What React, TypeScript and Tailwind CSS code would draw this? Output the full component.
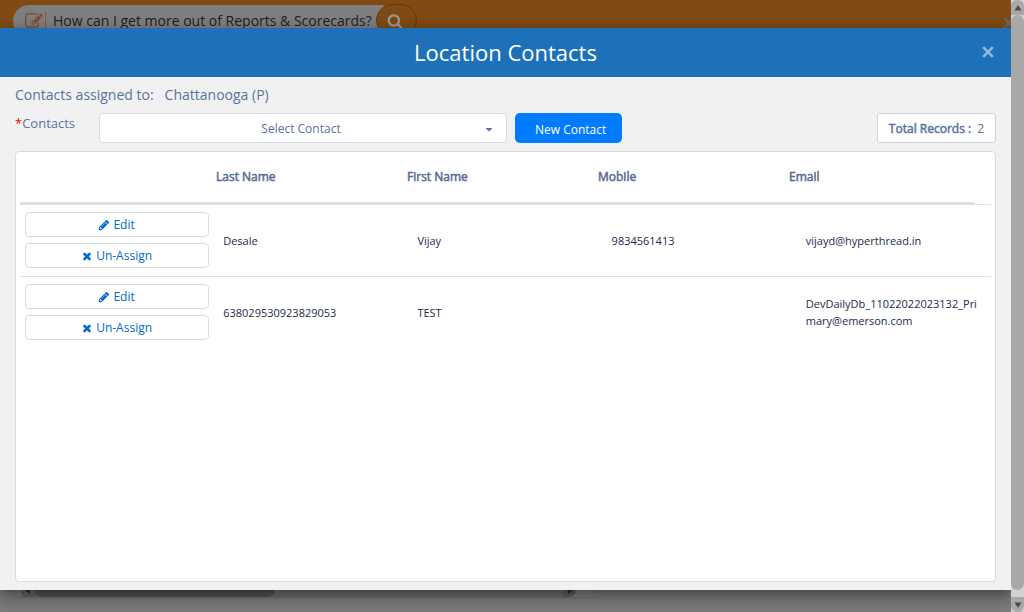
import type { ReactNode } from 'react';

type Contact = {
  id: number;
  lastName: string;
  firstName: string;
  mobile: string;
  email: string;
};

const contacts: Contact[] = [
  { id: 1, lastName: 'Desale', firstName: 'Vijay', mobile: '9834561413', email: 'vijayd@hyperthread.in' },
  {
    id: 2,
    lastName: '638029530923829053',
    firstName: 'TEST',
    mobile: '',
    email: 'DevDailyDb_11022022023132_Primary@emerson.com',
  },
];

const paths = {
  pencil:
    'M491 1536l91-91-235-235-91 91v107h128v128h107zm523-928q0-22-22-22-10 0-17 7l-542 542q-7 7-7 17 0 22 22 22 10 0 17-7l542-542q7-7 7-17zm-54-192l416 416-832 832h-416v-416zm683 96q0 53-37 90l-166 166-416-416 166-165q36-38 90-38 53 0 91 38l235 234q37 39 37 91z',
  times:
    'M1490 1322q0 40-28 68l-136 136q-28 28-68 28t-68-28l-294-294-294 294q-28 28-68 28t-68-28l-136-136q-28-28-28-68t28-68l294-294-294-294q-28-28-28-68t28-68l136-136q28-28 68-28t68 28l294 294 294-294q28-28 68-28t68 28l136 136q28 28 28 68t-28 68l-294 294 294 294q28 28 28 68z',
  search:
    'M1216 832q0-185-131.5-316.5t-316.5-131.5-316.5 131.5-131.5 316.5 131.5 316.5 316.5 131.5 316.5-131.5 131.5-316.5zm512 832q0 52-38 90t-90 38q-54 0-90-38l-343-342q-179 124-399 124-143 0-273.5-55.5t-225-150-150-225-55.5-273.5 55.5-273.5 150-225 225-150 273.5-55.5 273.5 55.5 225 150 150 225 55.5 273.5q0 220-124 399l343 343q37 37 37 90z',
  compose:
    'M888 1184l116-116-152-152-116 116v56h96v96h56zm440-720q-16-16-33 1l-350 350q-17 17-1 33t33-1l350-350q17-17 1-33zm80 594v190q0 119-84.5 203.5t-203.5 84.5h-832q-119 0-203.5-84.5t-84.5-203.5v-832q0-119 84.5-203.5t203.5-84.5h832q63 0 117 25 15 7 18 23 3 17-9 29l-49 49q-14 14-32 8-23-6-45-6h-832q-66 0-113 47t-47 113v832q0 66 47 113t113 47h832q66 0 113-47t47-113v-126q0-13 9-22l64-64q15-15 35-7t20 29zm-96-738l288 288-672 672h-288v-288zm444 132l-92 92-288-288 92-92q28-28 68-28t68 28l152 152q28 28 28 68t-28 68z',
};

function Icon({ name, className }: { name: keyof typeof paths; className: string }) {
  return (
    <svg viewBox="0 0 1792 1792" fill="currentColor" aria-hidden="true" className={className}>
      <path d={paths[name]} />
    </svg>
  );
}

function Cross() {
  return (
    <svg viewBox="0 0 12 12" stroke="currentColor" strokeWidth="2.6" aria-hidden="true" className="size-3">
      <path d="M1.2 1.2L10.8 10.8M10.8 1.2L1.2 10.8" />
    </svg>
  );
}

function TopBar() {
  return (
    <div className="flex h-7 shrink-0 items-start overflow-hidden bg-[#7f4a13] pl-[13px]">
      <div className="mt-[5px] flex h-8 w-[383px] items-center rounded-full bg-[#7f7f7f] pl-3">
        <Icon name="compose" className="size-[18px] text-[#7f4a33]" />
        <span className="ml-0.5 h-5 w-px bg-[#85583a]" />
        <input
          aria-label="Search"
          defaultValue="How can I get more out of Reports & Scorecards?"
          className="ml-[7px] w-[322px] bg-transparent text-sm text-[#1c2024] outline-none"
        />
      </div>
      <button
        aria-label="Search"
        className="-ml-5 mt-1 flex h-[33px] w-[41px] shrink-0 items-center justify-center rounded-full border border-[#5f370e] bg-[#7f4a13] pr-1 text-[#999]"
      >
        <Icon name="search" className="size-4" />
      </button>
      <button aria-label="Close page" className="-mr-1 ml-auto mt-[17px] text-[#6c6763]">
        <Cross />
      </button>
    </div>
  );
}

function BottomStrip() {
  return (
    <div className="h-[22px] shrink-0 overflow-hidden bg-[#7a7a7a] pl-4">
      <div className="flex h-2 w-[578px] overflow-hidden rounded-b border-b border-[#707070] bg-[#808080] pl-[5px]">
        <span className="flex w-[13px] justify-center rounded-bl bg-[#686868]">
          <svg viewBox="0 0 8 6" className="h-1.5 w-2" fill="#303030">
            <path d="M1 0H6V4Z" />
          </svg>
        </span>
        <span className="w-[529px] bg-[#707070]">
          <span className="block h-full w-[241px] rounded-b-lg bg-[#555]" />
        </span>
        <span className="flex w-[13px] justify-center rounded-br-lg bg-[#606060]">
          <svg viewBox="0 0 8 6" className="h-1.5 w-2" fill="#303030">
            <path d="M2 0H7L2 4Z" />
          </svg>
        </span>
      </div>
    </div>
  );
}

function PageScrollbar() {
  return (
    <div className="relative z-10 flex w-[13px] shrink-0 flex-col bg-[#d2d2d2]" aria-hidden="true">
      <span className="flex h-[15px] items-center justify-center rounded-t-md bg-[#a8a8a8]">
        <svg viewBox="0 0 8 6" className="h-1.5 w-2" fill="#4a4a4a">
          <path d="M4 0L7.5 5.5H.5Z" />
        </svg>
      </span>
      <span className="h-[576px] max-h-[94%] rounded-full bg-[#a8a8a8]" />
      <span className="mt-auto flex h-[15px] items-center justify-center rounded-b-md bg-[#a8a8a8]">
        <svg viewBox="0 0 8 6" className="h-1.5 w-2" fill="#4a4a4a">
          <path d="M4 6L.5 .5H7.5Z" />
        </svg>
      </span>
    </div>
  );
}

function RowButton({ icon, children }: { icon: keyof typeof paths; children: ReactNode }) {
  return (
    <button className="flex h-[25px] w-full items-center justify-center gap-[3px] rounded border border-[#d8dbe6] bg-white pr-px text-xs text-[#0069d2]">
      <Icon name={icon} className="size-3" />
      {children}
    </button>
  );
}

function ContactsTable() {
  return (
    <table className="block text-left">
      <thead className="mr-4 block border-b-2 border-[#dee2e6]">
        <tr className="grid h-[50px] grid-cols-5 items-center text-xs text-[#566b92]">
          <td />
          {['Last Name', 'First Name', 'Mobile', 'Email'].map((label) => (
            <th key={label} className="px-[5px] font-normal [-webkit-text-stroke:0.5px]">
              {label}
            </th>
          ))}
        </tr>
      </thead>
      <tbody className="block">
        {contacts.map((contact) => (
          <tr
            key={contact.id}
            className="grid grid-cols-5 items-center border-t border-[#dee2e6] pb-2 pt-[7px] text-[11px] leading-[17px] text-[#1b2a4e]"
          >
            <td className="flex flex-col gap-1.5 px-[5px]">
              <RowButton icon="pencil">Edit</RowButton>
              <RowButton icon="times">Un-Assign</RowButton>
            </td>
            <td className="px-[9px]">{contact.lastName}</td>
            <td className="px-[9px]">{contact.firstName}</td>
            <td className="px-[9px]">{contact.mobile}</td>
            <td className="break-all px-[9px]">{contact.email}</td>
          </tr>
        ))}
      </tbody>
    </table>
  );
}

function ContactsDialog() {
  return (
    <section
      role="dialog"
      aria-labelledby="dialog-title"
      className="relative flex flex-1 flex-col bg-[#f1f1f1] shadow-[0_5px_15px_rgba(0,0,0,0.5)]"
    >
      <header className="flex h-[49px] shrink-0 items-center bg-[#1e71b9] px-[17px] pb-0.5 text-white">
        <span className="w-3" />
        <h1 id="dialog-title" className="flex-1 text-center text-[22px] leading-8">
          Location Contacts
        </h1>
        <button aria-label="Close" className="text-[#8eb8dc]">
          <Cross />
        </button>
      </header>
      <div className="flex flex-1 flex-col px-[15px] pb-2 pt-2 text-[#5873a0]">
        <p className="flex gap-[11px] text-sm leading-5">
          <span>Contacts assigned to:</span>
          <span>Chattanooga (P)</span>
        </p>
        <div className="mt-2 flex h-[30px] gap-2">
          <label htmlFor="contact" className="w-[76px] shrink-0 text-[13px] leading-5">
            <span className="text-[#f00]">*</span>Contacts
          </label>
          <div className="relative w-[408px]">
            <select
              id="contact"
              className="h-full w-full appearance-none rounded border border-[#d8dbe6] bg-white pr-1 pt-0.5 text-center text-xs text-[#5873a0]"
              style={{ textAlignLast: 'center' }}
            >
              <option>Select Contact</option>
            </select>
            <svg
              viewBox="0 0 8 4"
              fill="currentColor"
              className="pointer-events-none absolute right-[14px] top-[15px] h-1 w-2"
            >
              <path d="M.5 0H7.5L4 3.5Z" />
            </svg>
          </div>
          <button className="rounded-[5px] bg-[#007bff] pl-5 pr-4 pt-[3px] text-xs text-white">New Contact</button>
          <p className="ml-auto flex items-center gap-1.5 rounded-[3px] border border-[#ced4da] bg-white px-[11px] pt-px text-xs">
            <span className="[-webkit-text-stroke:0.5px]">Total Records :</span>
            <span>2</span>
          </p>
        </div>
        <div className="mt-2 flex-1 rounded border border-[#d8dbe6] bg-white px-1">
          <ContactsTable />
        </div>
      </div>
    </section>
  );
}

export default function App() {
  return (
    <div className="flex min-h-screen font-['Open_Sans',sans-serif]">
      <main className="flex min-w-0 flex-1 flex-col">
        <TopBar />
        <ContactsDialog />
        <BottomStrip />
      </main>
      <PageScrollbar />
    </div>
  );
}
